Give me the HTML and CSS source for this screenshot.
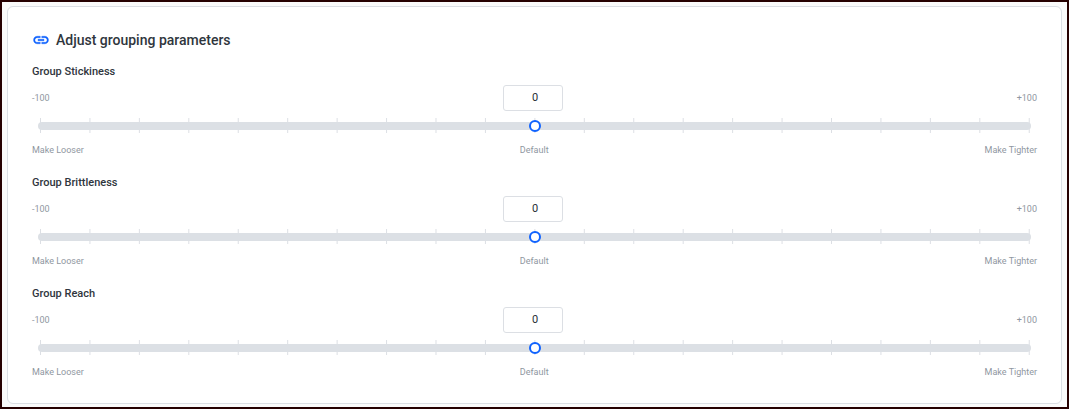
FILE: index.html
```html
<!DOCTYPE html>
<html lang="en">
<head>
  <meta charset="utf-8">
  <title>Adjust grouping parameters</title>
  <link rel="stylesheet" href="styles.css">
</head>
<body>

<main class="page">
  <form class="card">
    <h2 class="card-title">
      <svg class="card-icon" viewBox="0 0 24 24" aria-hidden="true">
        <path d="M3.900 12c0-1.710 1.390-3.100 3.100-3.100h4V7H7c-2.760 0-5 2.240-5 5s2.240 5 5 5h4v-1.900H7c-1.710 0-3.100-1.390-3.100-3.100zM8 13h8v-2H8v2zm9-6h-4v1.900h4c1.710 0 3.100 1.390 3.100 3.100s-1.390 3.100-3.100 3.100h-4V17h4c2.760 0 5-2.240 5-5s-2.240-5-5-5z"/>
      </svg>
      Adjust grouping parameters
    </h2>

    <section class="param">
      <label class="param-name" for="stickiness">Group Stickiness</label>
      <div class="param-row">
        <span>-100</span>
        <input class="param-value" id="stickiness" type="text" value="0">
        <span>+100</span>
      </div>
      <div class="slider">
        <input class="slider-input" type="range" min="-100" max="100" value="0" aria-label="Group Stickiness">
      </div>
      <div class="param-row">
        <span>Make Looser</span>
        <span>Default</span>
        <span>Make Tighter</span>
      </div>
    </section>

    <section class="param">
      <label class="param-name" for="brittleness">Group Brittleness</label>
      <div class="param-row">
        <span>-100</span>
        <input class="param-value" id="brittleness" type="text" value="0">
        <span>+100</span>
      </div>
      <div class="slider">
        <input class="slider-input" type="range" min="-100" max="100" value="0" aria-label="Group Brittleness">
      </div>
      <div class="param-row">
        <span>Make Looser</span>
        <span>Default</span>
        <span>Make Tighter</span>
      </div>
    </section>

    <section class="param">
      <label class="param-name" for="reach">Group Reach</label>
      <div class="param-row">
        <span>-100</span>
        <input class="param-value" id="reach" type="text" value="0">
        <span>+100</span>
      </div>
      <div class="slider">
        <input class="slider-input" type="range" min="-100" max="100" value="0" aria-label="Group Reach">
      </div>
      <div class="param-row">
        <span>Make Looser</span>
        <span>Default</span>
        <span>Make Tighter</span>
      </div>
    </section>
  </form>
</main>

</body>
</html>
```
FILE: styles.css
```css
* {
  box-sizing: border-box;
}

body {
  margin: 0;
  font-family: Roboto, sans-serif;
  color: #2f363d;
}

.page {
  min-height: 100vh;
  padding: 4px 5px 3px;
  border: 2px solid #260000;
  background: #fafafa;
}

.card {
  padding: 24px;
  border: 1px solid #dcdfe4;
  border-radius: 6px;
  background: #fff;
}

.card-title {
  display: flex;
  align-items: center;
  gap: 6px;
  margin: 0 0 16px;
  font-size: 14px;
  font-weight: 500;
  line-height: 18px;
}

.card-icon {
  width: 18px;
  height: 18px;
  fill: #0f62fe;
  stroke: #0f62fe;
  stroke-width: 0.5;
}

.param {
  margin-bottom: 19px;
}

.param:last-child {
  margin-bottom: 0;
}

.param-name {
  display: block;
  margin-bottom: 6px;
  font-size: 11px;
  font-weight: 500;
  line-height: 14px;
}

.param-row {
  display: flex;
  align-items: center;
  justify-content: space-between;
  font-size: 9px;
  line-height: 14px;
  color: #8f979f;
}

.param-value {
  width: 60px;
  height: 26px;
  padding: 0 2px 2px 6px;
  border: 1px solid #dcdfe4;
  border-radius: 3px;
  background: #fff;
  font-family: inherit;
  font-size: 11px;
  text-align: center;
  color: #272e35;
}

.slider {
  display: flex;
  align-items: center;
  height: 15px;
  margin: 7px 7px 10px 8px;
  /* one tick mark for every 10 units */
  background: linear-gradient(to right, #dcdfe4 1px, transparent 1px) 0 0 / calc((100% - 1px) / 20) 100%;
}

.slider-input {
  flex: 1;
  height: 8px;
  margin: 0 -1px 0 -2px;
  border-radius: 4px;
  background: #dce0e5;
  appearance: none;
}

.slider-input::-webkit-slider-thumb {
  width: 12px;
  height: 12px;
  border: 2px solid #0f62fe;
  border-radius: 50%;
  background: #fff;
  appearance: none;
}
```
